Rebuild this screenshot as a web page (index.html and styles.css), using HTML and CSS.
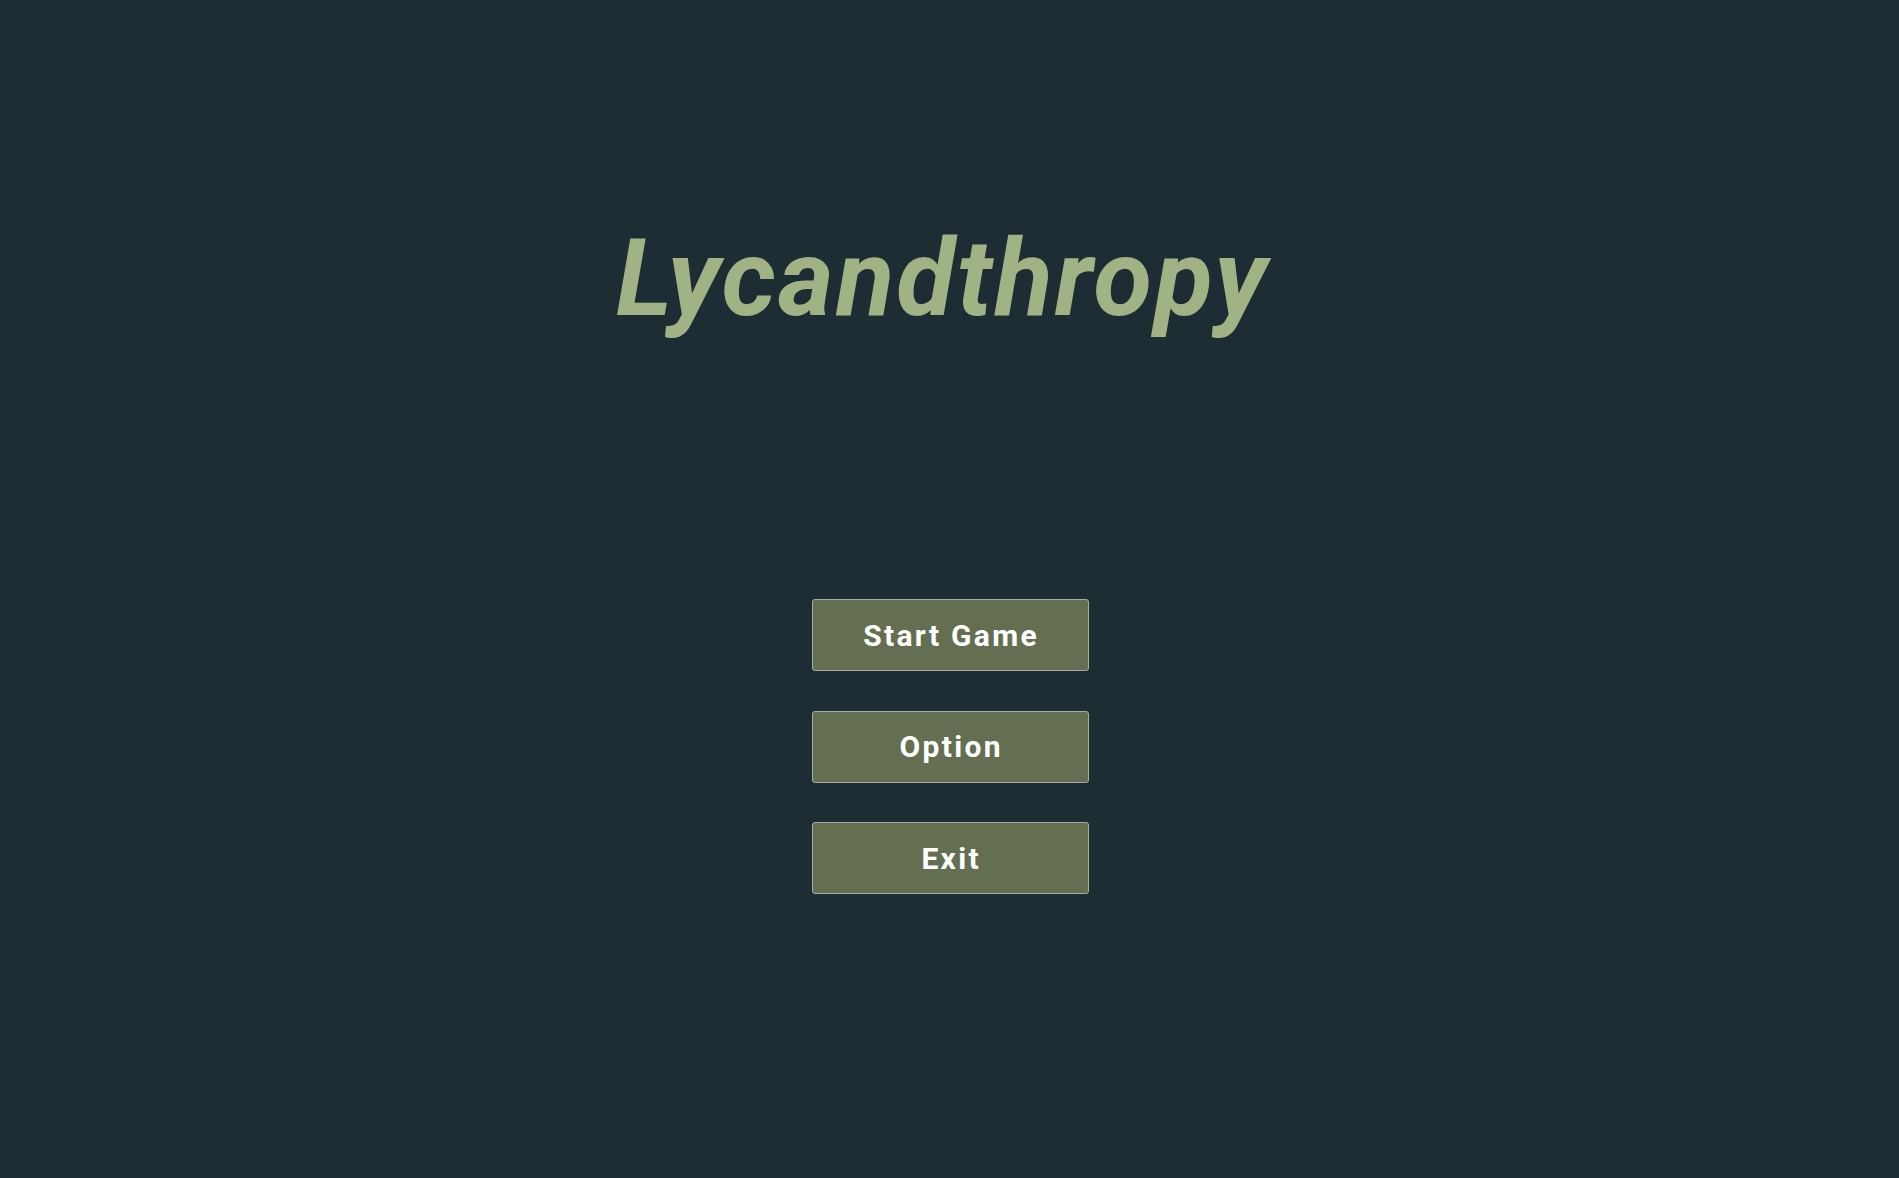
FILE: index.html
```html
<!DOCTYPE html>
<html lang="en">
<head>
<meta charset="utf-8">
<title>Lycandthropy</title>
<link rel="stylesheet" href="styles.css">
</head>
<body>
<main class="menu">
  <h1 class="title">Lycandthropy</h1>
  <nav class="buttons">
    <button class="btn">Start Game</button>
    <button class="btn">Option</button>
    <button class="btn">Exit</button>
  </nav>
</main>
</body>
</html>
```

FILE: styles.css
```css
html, body {
  margin: 0;
  padding: 0;
  height: 100%;
}
body {
  background: #1d2d33;
  font-family: Roboto, "Noto Sans", sans-serif;
}
.menu {
  display: flex;
  flex-direction: column;
  align-items: center;
  padding-top: 225px;
}
.title {
  margin: 0;
  padding-right: 14px;
  font-size: 107px;
  line-height: 1;
  font-weight: 700;
  font-style: italic;
  color: #a1b385;
  letter-spacing: 2.3px;
}
.buttons {
  display: flex;
  flex-direction: column;
  align-items: center;
  gap: 39.5px;
  margin-top: 267px;
  padding-left: 1px;
}
.btn {
  box-sizing: border-box;
  width: 277px;
  height: 72px;
  display: flex;
  align-items: center;
  justify-content: center;
  background: #646f51;
  border: 1px solid #a7aba6;
  border-radius: 3px;
  color: #ffffff;
  font-family: Roboto, "Noto Sans", sans-serif;
  font-size: 30px;
  font-weight: 700;
  letter-spacing: 2.3px;
  padding: 0 0 0 2.3px;
}
```
